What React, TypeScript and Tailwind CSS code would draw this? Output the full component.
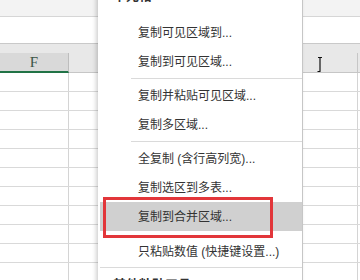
import React from 'react';

type Item = { label: string; kind?: 'item' | 'sep' | 'fullsep' | 'header'; active?: boolean; extraTop?: boolean };

const menuItems: Item[] = [
  { label: '复制可见区域到...' },
  { label: '复制到可见区域...' },
  { label: '', kind: 'sep' },
  { label: '复制并粘贴可见区域...' },
  { label: '复制多区域...' },
  { label: '', kind: 'sep' },
  { label: '全复制 (含行高列宽)...' },
  { label: '复制选区到多表...' },
  { label: '复制到合并区域...', active: true },
  { label: '只粘贴数值 (快捷键设置...)', extraTop: true },
  { label: '', kind: 'fullsep' },
  { label: '其他粘贴工具', kind: 'header' },
];

const rows = Array.from({ length: 11 });

export default function App() {
  return (
    <div
      className="relative w-[360px] h-[280px] overflow-hidden bg-white text-[#333]"
      style={{ fontFamily: '"Liberation Sans", "Noto Sans CJK SC", sans-serif' }}
    >
      {/* Spreadsheet behind the menu */}
      <div className="h-[17px] bg-[#f3f3f3] border-b border-[#d6d6d6]" />
      <div className="h-[27px] bg-white border-b border-[#c9c9c9]" />
      <div className="h-[9px] bg-[#e8e8e8]" />
      <div className="grid grid-cols-[69px_289px_1fr] h-[20px] bg-[#e8e8e8]">
        <div className="bg-[#d9d9d9] border-b-2 border-[#217346] border-r border-r-[#bdbdbd] flex items-center justify-center text-[15px] leading-none text-[#3b5446]" style={{ fontFamily: '"Liberation Serif", serif' }}>
          F
        </div>
        <div className="border-b border-r border-[#c6c6c6] relative">
          <svg className="absolute left-[248px] top-[4px]" width="6" height="15" viewBox="0 0 6 15">
            <path d="M1 0.5h4M3 0.5v14M0.5 14.5h3" stroke="#111" strokeWidth="1.2" fill="none" />
          </svg>
        </div>
        <div className="border-b border-[#c6c6c6]" />
      </div>
      {rows.map((_, i) => (
        <div key={i} className="grid grid-cols-[69px_289px_1fr] h-[19px] border-b border-[#d9d9d9]">
          <div className="border-r border-[#d4d4d4]" />
          <div className="border-r border-[#d4d4d4]" />
          <div />
        </div>
      ))}

      {/* Context menu */}
      <div className="absolute left-[98px] top-[-20px] w-[205px] bg-white border-r border-[#c6c6c6] pl-[2px] shadow-[-2px_0_4px_rgba(0,0,0,0.18)] text-[12px]">
        <div className="h-[38px] flex items-end pb-[14px] pl-[13px] font-bold text-[13px] leading-[16px]">单元格</div>
        {menuItems.map((it, i) => {
          if (it.kind === 'sep')
            return (
              <div key={i} className="h-[5px] pt-[2px] pl-[31px]">
                <div className="h-px bg-[#dadada]" />
              </div>
            );
          if (it.kind === 'fullsep')
            return (
              <div key={i} className="h-[3px] pt-[1px]">
                <div className="h-px bg-[#dadada]" />
              </div>
            );
          if (it.kind === 'header')
            return (
              <div key={i} className="h-[29px] flex items-center pl-[13px] pt-[3px] font-bold text-[13px]">
                {it.label}
              </div>
            );
          return (
            <div
              key={i}
              className={`h-[29px] flex items-center pl-[38px] whitespace-nowrap ${it.active ? 'bg-[#d0d0d0]' : ''} ${it.extraTop ? 'mt-[6px]' : ''}`}
            >
              {it.label}
            </div>
          );
        })}
      </div>

      {/* Red annotation box */}
      <div className="absolute left-[103px] top-[197px] w-[170px] h-[41px] border-[3px] border-[#e2363a]" />
    </div>
  );
}
